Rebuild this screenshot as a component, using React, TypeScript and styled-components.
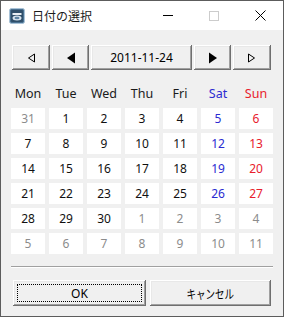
import React from 'react';
import styled, { createGlobalStyle } from 'styled-components';

const GlobalStyle = createGlobalStyle`
  html, body {
    margin: 0;
    padding: 0;
    background: #f0f0f0;
  }
  * {
    box-sizing: border-box;
  }
`;

const Window = styled.div`
  width: 284px;
  height: 317px;
  border: 1px solid #5c5c5c;
  background: #f0f0f0;
  font-family: 'Noto Sans', 'Noto Sans CJK JP', sans-serif;
  font-size: 12px;
  color: #000;
  display: flex;
  flex-direction: column;
`;

const TitleBar = styled.div`
  height: 29px;
  background: #fff;
  display: flex;
  align-items: center;
  padding-left: 8px;
`;

const Title = styled.span`
  margin-left: 7px;
  font-family: 'Noto Sans CJK JP', sans-serif;
  font-size: 12px;
  color: #1a1a1a;
  flex: 1;
`;

const Caption = styled.div`
  width: 46px;
  height: 29px;
  display: flex;
  align-items: center;
  justify-content: center;
`;

const Body = styled.div`
  flex: 1;
  padding: 15px 10px 0 10px;
  display: flex;
  flex-direction: column;
`;

const NavRow = styled.div`
  display: flex;
  gap: 2px;
  margin: 0 2px 0 1px;
  height: 25px;
`;

const ClassicButton = styled.button<{ $w: number }>`
  width: ${(p) => p.$w}px;
  height: 100%;
  border: none;
  padding: 0;
  background: #f0f0f0;
  box-shadow: inset -1px -1px #6f6f6f, inset 1px 1px #ffffff,
    inset -2px -2px #a0a0a0, inset 2px 2px #e8e8e8;
  font-family: 'Noto Sans', 'Noto Sans CJK JP', sans-serif;
  font-size: 12px;
  color: #000;
  display: flex;
  align-items: center;
  justify-content: center;
  position: relative;
`;

const Kana = styled.span`
  display: inline-block;
  font-family: 'Noto Sans CJK JP', sans-serif;
  font-size: 12.5px;
  transform: scaleX(0.76);
`;

const Focus = styled.span`
  position: absolute;
  inset: 4px;
  border: 1px dotted #000;
`;

const Grid = styled.div`
  display: grid;
  grid-template-columns: repeat(7, 34px);
  column-gap: 4px;
  row-gap: 4px;
`;

const HeadRow = styled(Grid)`
  margin-top: 10px;
  height: 26px;
  align-items: center;
`;

const Head = styled.div<{ $c: string }>`
  text-align: center;
  color: ${(p) => p.$c};
  font-size: 12.5px;
`;

const Days = styled(Grid)`
  margin-top: 2px;
  grid-auto-rows: 21px;
`;

const Cell = styled.div<{ $c: string }>`
  background: #fff;
  display: flex;
  align-items: center;
  justify-content: center;
  color: ${(p) => p.$c};
  font-size: 12px;
`;

const Separator = styled.div`
  margin-top: 12px;
  border-top: 1px solid #a0a0a0;
  border-bottom: 1px solid #fff;
`;

const Footer = styled.div`
  display: flex;
  gap: 4px;
  margin: 12px 2px 0 2px;
  height: 26px;
`;

const Tri = ({ dir, filled }: { dir: 'l' | 'r'; filled: boolean }) => (
  <svg width="10" height="12" viewBox="0 0 10 12">
    {dir === 'l' ? (
      <polygon
        points={filled ? '1,6 9,0.5 9,11.5' : '2.5,6 8.5,2 8.5,10'}
        fill={filled ? '#000' : 'none'}
        stroke="#000"
        strokeWidth={filled ? 0 : 1}
      />
    ) : (
      <polygon
        points={filled ? '9,6 1,0.5 1,11.5' : '7.5,6 1.5,2 1.5,10'}
        fill={filled ? '#000' : 'none'}
        stroke="#000"
        strokeWidth={filled ? 0 : 1}
      />
    )}
  </svg>
);

const AppIcon = () => (
  <svg width="16" height="16" viewBox="0 0 16 16">
    <rect x="0.5" y="0.5" width="15" height="15" rx="2" fill="#4a7191" stroke="#a9c3d8" />
    <rect x="2" y="2" width="12" height="12" rx="1" fill="#2f4f6a" />
    <path d="M3.5 5 h9 v2 h-9z" fill="#e8eef3" />
    <ellipse cx="8" cy="10" rx="4.5" ry="2.5" fill="#d8e4ee" />
    <ellipse cx="8" cy="10" rx="2.5" ry="1.2" fill="#5d83a3" />
  </svg>
);

const BLACK = '#111';
const GRAY = '#8c8c8c';
const BLUE = '#2b2bd1';
const RED = '#e8202c';

const heads = ['Mon', 'Tue', 'Wed', 'Thu', 'Fri', 'Sat', 'Sun'];

const weeks: number[][] = [
  [31, 1, 2, 3, 4, 5, 6],
  [7, 8, 9, 10, 11, 12, 13],
  [14, 15, 16, 17, 18, 19, 20],
  [21, 22, 23, 24, 25, 26, 27],
  [28, 29, 30, 1, 2, 3, 4],
  [5, 6, 7, 8, 9, 10, 11],
];

const dayColor = (w: number, i: number, d: number) => {
  const other = (w === 0 && d > 20) || (w >= 4 && d < 15);
  if (other) return GRAY;
  if (i === 5) return BLUE;
  if (i === 6) return RED;
  return BLACK;
};

const App: React.FunctionComponent = () => (
  <>
    <GlobalStyle />
    <Window>
      <TitleBar>
        <AppIcon />
        <Title>日付の選択</Title>
        <Caption>
          <svg width="10" height="1">
            <rect width="10" height="1" fill="#000" />
          </svg>
        </Caption>
        <Caption>
          <svg width="10" height="10">
            <rect x="0.5" y="0.5" width="9" height="9" fill="none" stroke="#cccccc" />
          </svg>
        </Caption>
        <Caption>
          <svg width="11" height="11">
            <path d="M0.5 0.5 L10.5 10.5 M10.5 0.5 L0.5 10.5" stroke="#000" strokeWidth="1" />
          </svg>
        </Caption>
      </TitleBar>
      <Body>
        <NavRow>
          <ClassicButton $w={38}>
            <Tri dir="l" filled={false} />
          </ClassicButton>
          <ClassicButton $w={37}>
            <Tri dir="l" filled />
          </ClassicButton>
          <ClassicButton $w={101}>2011-11-24</ClassicButton>
          <ClassicButton $w={37}>
            <Tri dir="r" filled />
          </ClassicButton>
          <ClassicButton $w={38}>
            <Tri dir="r" filled={false} />
          </ClassicButton>
        </NavRow>
        <HeadRow>
          {heads.map((h, i) => (
            <Head key={h} $c={i === 5 ? BLUE : i === 6 ? RED : '#1a1a1a'}>
              {h}
            </Head>
          ))}
        </HeadRow>
        <Days>
          {weeks.map((wk, w) =>
            wk.map((d, i) => (
              <Cell key={`${w}-${i}`} $c={dayColor(w, i, d)}>
                {d}
              </Cell>
            )),
          )}
        </Days>
        <Separator />
        <Footer>
          <ClassicButton $w={134}>
            <Focus />
            OK
          </ClassicButton>
          <ClassicButton $w={122}>
            <Kana>キャンセル</Kana>
          </ClassicButton>
        </Footer>
      </Body>
    </Window>
  </>
);

export default App;
